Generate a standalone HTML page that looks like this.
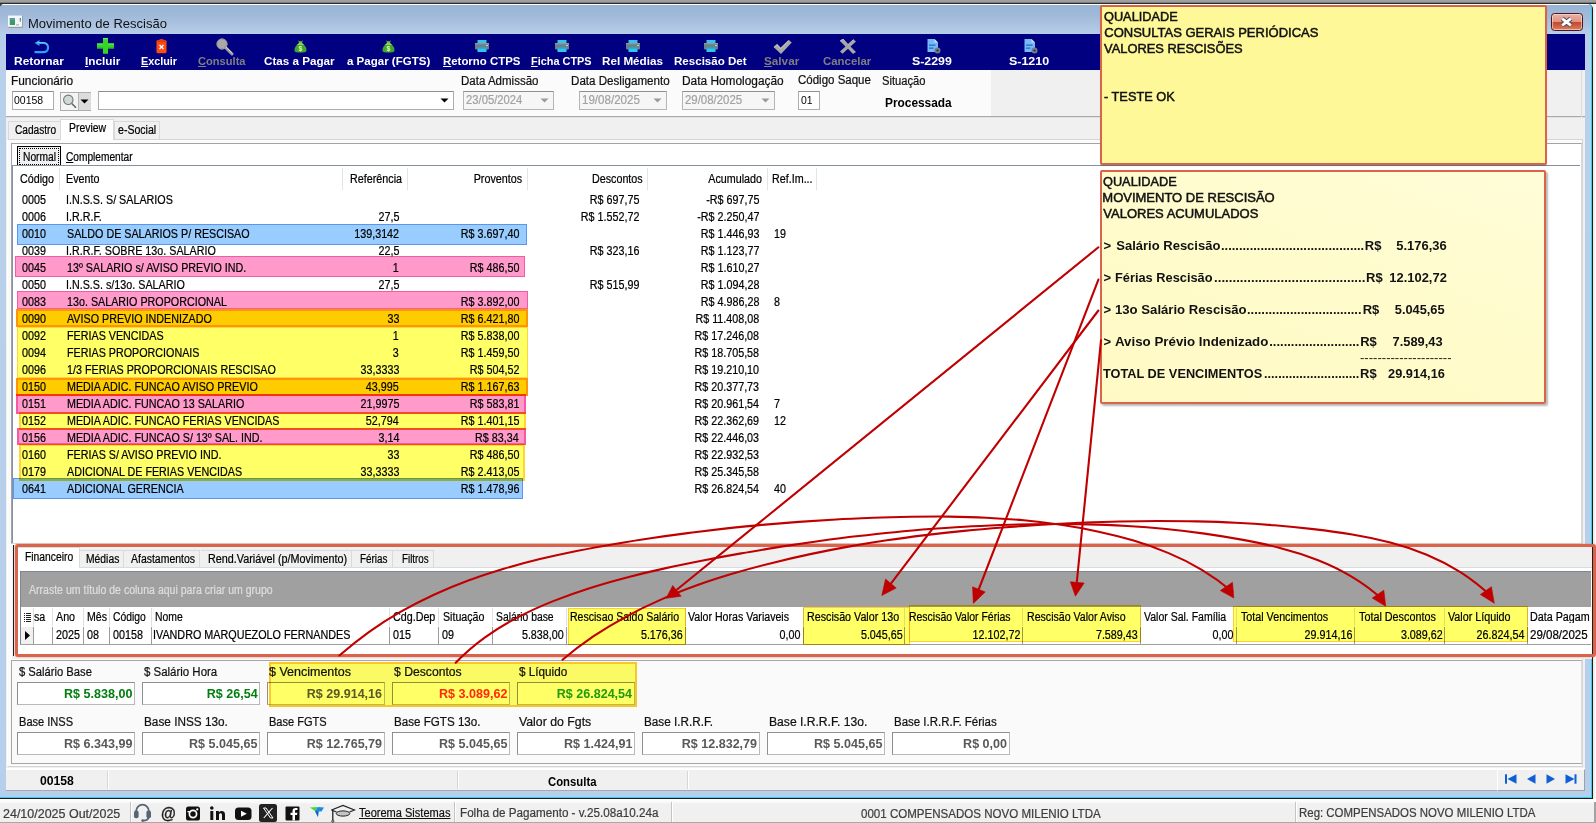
<!DOCTYPE html>
<html lang="pt-BR"><head><meta charset="utf-8"><title>Movimento de Rescisão</title>
<style>
html,body{margin:0;padding:0}
body{width:1596px;height:823px;overflow:hidden;position:relative;background:#fff;font-family:"Liberation Sans",sans-serif;}
#r{position:absolute;left:0;top:0;width:1596px;height:823px;overflow:hidden}
#r div,#r svg,#r .t{position:absolute}
.t{white-space:pre;color:#000}
.g{-webkit-text-stroke:.22px currentColor}
u{text-decoration:underline}
</style></head>
<body><div id="r">
<div style="left:0px;top:0px;width:1596px;height:823px;background:#fff"></div>
<div style="left:0px;top:0px;width:1596px;height:4px;background:linear-gradient(#a2a2a2,#9c9c9c 2.2px,#4a4a4a 3px,#262626 3.6px)"></div>
<div style="left:1593px;top:4px;width:3px;height:819px;background:linear-gradient(90deg,#e6e6e6,#fff)"></div>
<div style="left:0px;top:4px;width:1593px;height:795px;background:#1c1c1c;border-radius:0 5px 0 0"></div>
<div style="left:0px;top:4px;width:1592px;height:794px;background:#35cdf0;border-radius:0 4px 0 0"></div>
<div style="left:0px;top:4px;width:1591px;height:793px;background:linear-gradient(#fff,#fff 1px,#99b4d5 1px,#a1bad9 12px,#afc7e3 24px,#b6cee9 30px,#b8d0ea 60px,#b7cfea);border-radius:0 4px 0 0;"></div>
<svg style="left:0;top:4px" width="3" height="3" viewBox="0 0 3 3"><path d="M0 0 H2.6 L0 2.6Z" fill="#4a4a4a"/></svg>
<svg style="left:8px;top:15px" width="16" height="14" viewBox="0 0 16 14"><rect x="0.3" y="0.8" width="14.4" height="12" fill="#8d9299"/><rect x="0" y="0.5" width="14" height="11.3" fill="#f4f6f8"/><rect x="1.8" y="3" width="5.2" height="7" fill="#3f9a62"/><rect x="1.8" y="3" width="5.2" height="2.2" fill="#4f9bb8"/><rect x="11.8" y="3" width="1" height="2.4" fill="#2b5fa8"/><rect x="11.8" y="5.2" width="1" height="1.6" fill="#3faa4a"/><rect x="8" y="9" width="3" height="1.6" fill="#c3c7cc"/></svg>
<span class="t" style="top:18px;font-size:12.5px;line-height:12.5px;color:#111;left:28.16px;transform:scaleX(1.0420);transform-origin:0 0;">Movimento de Rescisão</span>
<div style="left:1551px;top:13px;width:32px;height:18px;border:1px solid #4a1522;border-radius:3.5px;box-sizing:border-box;background:linear-gradient(#eab0a2,#e09482 47%,#c3472b 50%,#cc5a3e 70%,#d88068);box-shadow:inset 0 0 0 1px rgba(255,235,225,.55)"></div>
<svg style="left:1559px;top:16px" width="15" height="12" viewBox="0 0 15 12"><path d="M3.2 2.6 L11.8 9.4 M11.8 2.6 L3.2 9.4" stroke="#474a5c" stroke-width="4.6" stroke-linecap="butt"/><path d="M3.2 2.6 L11.8 9.4 M11.8 2.6 L3.2 9.4" stroke="#fff" stroke-width="2.7" stroke-linecap="butt"/></svg>
<div style="left:6px;top:34px;width:1579px;height:757px;background:#f0f0f0"></div>
<div style="left:6px;top:34px;width:1579px;height:36px;background:#000080"></div>
<span class="t" style="top:56px;font-size:11px;line-height:11px;font-weight:bold;color:#fff;left:14.40px;transform:scaleX(1.0867);transform-origin:0 0;">Retornar</span>
<svg style="left:32.5px;top:39px" width="17" height="15" viewBox="0 0 17 15"><path d="M6.5 1 L1.5 4 L6.5 7 Z" fill="#2aa0ff"/><path d="M4 4 H10.5 A4.6 4.6 0 0 1 10.5 13.2 H1.5" fill="none" stroke="#2aa0ff" stroke-width="2.2"/><path d="M4 3.6 H10.5 A4.2 4.2 0 0 1 14.6 6" fill="none" stroke="#9bd8ff" stroke-width=".8"/></svg>
<span class="t" style="top:56px;font-size:11px;line-height:11px;font-weight:bold;color:#fff;left:85.00px;transform:scaleX(1.0675);transform-origin:0 0;"><u>I</u>ncluir</span>
<svg style="left:96.5px;top:38px" width="17" height="16" viewBox="0 0 17 16"><path d="M6 0 H11 V5.5 H17 V10.5 H11 V16 H6 V10.5 H0 V5.5 H6 Z" fill="#35d42a"/><path d="M6 0 H11 V1.2 H6 Z M0 5.5 H6 V6.5 H0Z M11 5.5 H17 V6.5 H11Z" fill="#6df060"/><path d="M0 9.6 H6 V10.5 H0Z M11 9.6 H17 V10.5 H11Z M6 15 H11 V16 H6Z" fill="#22a81c"/></svg>
<span class="t" style="top:56px;font-size:11px;line-height:11px;font-weight:bold;color:#fff;left:141.00px;transform:scaleX(0.9812);transform-origin:0 0;"><u>E</u>xcluir</span>
<svg style="left:155.5px;top:39px" width="11" height="15" viewBox="0 0 11 15"><rect x="3.5" y="0" width="4" height="2" fill="#d93a10"/><rect x="0.5" y="1.3" width="10" height="13" rx="1.5" fill="#ff4a12"/><rect x="0.5" y="1.3" width="10" height="2" rx="1" fill="#e23c0c"/><path d="M3.5 6 L7.5 10 M7.5 6 L3.5 10" stroke="#fff" stroke-width="1.4"/></svg>
<span class="t" style="top:56px;font-size:11px;line-height:11px;font-weight:bold;color:#7f7f7f;left:198.00px;transform:scaleX(1.0096);transform-origin:0 0;"><u>C</u>onsulta</span>
<svg style="left:215.5px;top:38px" width="18" height="18" viewBox="0 0 18 18"><circle cx="6" cy="6" r="5.2" fill="#a9a9a9"/><circle cx="6" cy="6" r="5.2" fill="none" stroke="#8f8f8f" stroke-width="1"/><path d="M9.5 9.5 L16 16" stroke="#9c9c9c" stroke-width="3" stroke-linecap="round"/><path d="M10 9 L16.5 15.5" stroke="#d8d8d8" stroke-width="1"/></svg>
<span class="t" style="top:56px;font-size:11px;line-height:11px;font-weight:bold;color:#fff;left:264.00px;transform:scaleX(1.0599);transform-origin:0 0;">Ctas a Pagar</span>
<svg style="left:293.5px;top:40px" width="13" height="13" viewBox="0 0 13 13"><path d="M4.3 0.3 L5.5 1.3 H7.5 L8.7 0.3 L8 3 H5 Z" fill="#6fc04a"/><path d="M5 3 H8 C11 5 13 8 12.5 11 C12 13 1 13 0.5 11 C0 8 2 5 5 3Z" fill="#3fa535"/><path d="M5 3 H8 C9 4 9.5 4.5 10 5 H3 C3.5 4.5 4 4 5 3Z" fill="#8fd14f"/><text x="6.5" y="11" font-size="7" font-weight="bold" text-anchor="middle" fill="#eaf7a0" font-family="Liberation Sans">$</text></svg>
<span class="t" style="top:56px;font-size:11px;line-height:11px;font-weight:bold;color:#fff;left:347.00px;transform:scaleX(1.0477);transform-origin:0 0;">a Pagar (FGTS)</span>
<svg style="left:382.2px;top:40px" width="13" height="13" viewBox="0 0 13 13"><path d="M4.3 0.3 L5.5 1.3 H7.5 L8.7 0.3 L8 3 H5 Z" fill="#6fc04a"/><path d="M5 3 H8 C11 5 13 8 12.5 11 C12 13 1 13 0.5 11 C0 8 2 5 5 3Z" fill="#3fa535"/><path d="M5 3 H8 C9 4 9.5 4.5 10 5 H3 C3.5 4.5 4 4 5 3Z" fill="#8fd14f"/><text x="6.5" y="11" font-size="7" font-weight="bold" text-anchor="middle" fill="#eaf7a0" font-family="Liberation Sans">$</text></svg>
<span class="t" style="top:56px;font-size:11px;line-height:11px;font-weight:bold;color:#fff;left:443.00px;transform:scaleX(1.0375);transform-origin:0 0;"><u>R</u>etorno CTPS</span>
<svg style="left:475px;top:40px" width="14" height="12" viewBox="0 0 14 12"><rect x="2.5" y="0" width="9" height="3.6" fill="#35c3ee"/><rect x="0" y="3" width="14" height="6.5" rx="1" fill="#6e7f86"/><rect x="0" y="3" width="14" height="1.3" fill="#8b9aa0"/><rect x="2.5" y="7.6" width="9" height="4.4" fill="#35c3ee"/><rect x="2.5" y="7.6" width="9" height="1" fill="#1d9fce"/><rect x="11.3" y="5" width="1.4" height="1" fill="#d8f4ff"/></svg>
<span class="t" style="top:56px;font-size:11px;line-height:11px;font-weight:bold;color:#fff;left:531.00px;transform:scaleX(0.9920);transform-origin:0 0;"><u>F</u>icha CTPS</span>
<svg style="left:554.5px;top:40px" width="14" height="12" viewBox="0 0 14 12"><rect x="2.5" y="0" width="9" height="3.6" fill="#35c3ee"/><rect x="0" y="3" width="14" height="6.5" rx="1" fill="#6e7f86"/><rect x="0" y="3" width="14" height="1.3" fill="#8b9aa0"/><rect x="2.5" y="7.6" width="9" height="4.4" fill="#35c3ee"/><rect x="2.5" y="7.6" width="9" height="1" fill="#1d9fce"/><rect x="11.3" y="5" width="1.4" height="1" fill="#d8f4ff"/></svg>
<span class="t" style="top:56px;font-size:11px;line-height:11px;font-weight:bold;color:#fff;left:602.00px;transform:scaleX(1.0602);transform-origin:0 0;">Rel Médias</span>
<svg style="left:625.8px;top:40px" width="14" height="12" viewBox="0 0 14 12"><rect x="2.5" y="0" width="9" height="3.6" fill="#35c3ee"/><rect x="0" y="3" width="14" height="6.5" rx="1" fill="#6e7f86"/><rect x="0" y="3" width="14" height="1.3" fill="#8b9aa0"/><rect x="2.5" y="7.6" width="9" height="4.4" fill="#35c3ee"/><rect x="2.5" y="7.6" width="9" height="1" fill="#1d9fce"/><rect x="11.3" y="5" width="1.4" height="1" fill="#d8f4ff"/></svg>
<span class="t" style="top:56px;font-size:11px;line-height:11px;font-weight:bold;color:#fff;left:674.00px;transform:scaleX(1.0515);transform-origin:0 0;">Rescisão Det</span>
<svg style="left:704px;top:40px" width="14" height="12" viewBox="0 0 14 12"><rect x="2.5" y="0" width="9" height="3.6" fill="#35c3ee"/><rect x="0" y="3" width="14" height="6.5" rx="1" fill="#6e7f86"/><rect x="0" y="3" width="14" height="1.3" fill="#8b9aa0"/><rect x="2.5" y="7.6" width="9" height="4.4" fill="#35c3ee"/><rect x="2.5" y="7.6" width="9" height="1" fill="#1d9fce"/><rect x="11.3" y="5" width="1.4" height="1" fill="#d8f4ff"/></svg>
<span class="t" style="top:56px;font-size:11px;line-height:11px;font-weight:bold;color:#7f7f7f;left:764.00px;transform:scaleX(1.0668);transform-origin:0 0;"><u>S</u>alvar</span>
<svg style="left:772.5px;top:40px" width="19" height="14" viewBox="0 0 19 14"><path d="M0.5 7 L4.2 3.8 L7.6 7.6 L15.5 0 L18.8 2.6 L8 14 Z" fill="#a8a8a8"/><path d="M1 7.5 L4 5 L7.5 9 L16 0.5" fill="none" stroke="#c9c9c9" stroke-width=".8"/></svg>
<span class="t" style="top:56px;font-size:11px;line-height:11px;font-weight:bold;color:#7f7f7f;left:823.00px;transform:scaleX(1.0384);transform-origin:0 0;">Cancelar</span>
<svg style="left:839px;top:39px" width="18" height="15" viewBox="0 0 18 15"><path d="M1 2 L4 0 L9 5.5 L14.5 0.5 L17 2.5 L11.5 7.5 L17 13 L14 15 L9 9.8 L3.5 14.8 L1 12.5 L6.5 7.5 Z" fill="#a6a6a6"/><path d="M1 2 L4 0 L9 5.5 L14.5 0.5" fill="none" stroke="#cfcfcf" stroke-width=".8"/></svg>
<span class="t" style="top:56px;font-size:11px;line-height:11px;font-weight:bold;color:#fff;left:912.00px;transform:scaleX(1.1230);transform-origin:0 0;">S-2299</span>
<svg style="left:926.5px;top:39px" width="14" height="15" viewBox="0 0 14 15"><path d="M0.5 0 H7.5 L11 3.5 V13 H0.5 Z" fill="#78b8f4"/><path d="M7.5 0 L11 3.5 H7.5 Z" fill="#c4e2ff"/><rect x="2" y="5.4" width="6.5" height="1.6" fill="#2f7bd8"/><rect x="2" y="8.4" width="4.5" height="1.6" fill="#2f7bd8"/><circle cx="10.5" cy="11.5" r="3" fill="#6f7d86"/><circle cx="10.5" cy="11.5" r="1.1" fill="#1a2a7a"/></svg>
<span class="t" style="top:56px;font-size:11px;line-height:11px;font-weight:bold;color:#fff;left:1009.00px;transform:scaleX(1.1314);transform-origin:0 0;">S-1210</span>
<svg style="left:1023.5px;top:39px" width="14" height="15" viewBox="0 0 14 15"><path d="M0.5 0 H7.5 L11 3.5 V13 H0.5 Z" fill="#78b8f4"/><path d="M7.5 0 L11 3.5 H7.5 Z" fill="#c4e2ff"/><rect x="2" y="5.4" width="6.5" height="1.6" fill="#2f7bd8"/><rect x="2" y="8.4" width="4.5" height="1.6" fill="#2f7bd8"/><circle cx="10.5" cy="11.5" r="3" fill="#6f7d86"/><circle cx="10.5" cy="11.5" r="1.1" fill="#1a2a7a"/></svg>
<div style="left:6px;top:70px;width:985px;height:47px;background:#fbfbfb"></div>
<div style="left:6px;top:116px;width:1579px;height:1px;background:#a9a9a9"></div>
<div style="left:6px;top:117px;width:1579px;height:1px;background:#e3e3e3"></div>
<div style="left:1581px;top:70px;width:1px;height:47px;background:#dcdcdc"></div>
<span class="t g" style="top:75px;font-size:12px;line-height:12px;color:#111;left:11.20px;transform:scaleX(0.9900);transform-origin:0 0;">Funcionário</span>
<span class="t g" style="top:75px;font-size:12px;line-height:12px;color:#111;left:461.20px;transform:scaleX(0.9597);transform-origin:0 0;">Data Admissão</span>
<span class="t g" style="top:75px;font-size:12px;line-height:12px;color:#111;left:571.30px;transform:scaleX(0.9670);transform-origin:0 0;">Data Desligamento</span>
<span class="t g" style="top:75px;font-size:12px;line-height:12px;color:#111;left:681.60px;transform:scaleX(0.9898);transform-origin:0 0;">Data Homologação</span>
<span class="t g" style="top:74px;font-size:12px;line-height:12px;color:#111;left:797.60px;transform:scaleX(0.9583);transform-origin:0 0;">Código Saque</span>
<span class="t g" style="top:75px;font-size:12px;line-height:12px;color:#111;left:881.60px;transform:scaleX(0.9314);transform-origin:0 0;">Situação</span>
<span class="t" style="top:97px;font-size:12px;line-height:12px;font-weight:bold;left:884.60px;transform:scaleX(0.9896);transform-origin:0 0;">Processada</span>
<div style="left:12px;top:91px;width:42px;height:19px;box-sizing:border-box;border:1px solid #abadb3;border-top-color:#8e8f93;background:#fff"></div>
<span class="t" style="top:95px;font-size:11px;line-height:11px;left:14.20px;transform:scaleX(0.9517);transform-origin:0 0;">00158</span>
<div style="left:60px;top:92px;width:31px;height:19px;box-sizing:border-box;border:1px solid #adadad;background:#f4f4f4"></div>
<div style="left:78px;top:93px;width:12px;height:17px;background:#dcdcdc;border-left:1px solid #b4b4b4"></div>
<svg style="left:62px;top:93px" width="16" height="17" viewBox="0 0 16 17"><circle cx="6.3" cy="6.8" r="4.7" fill="#cfdad8" stroke="#6e7b78" stroke-width="1.1"/><path d="M9.8 10.5 L14 14.8" stroke="#5b6663" stroke-width="1.5"/></svg>
<svg style="left:80px;top:99px" width="9" height="5" viewBox="0 0 9 5"><path d="M0.5 0.5 H8.5 L4.5 4.5 Z" fill="#000"/></svg>
<div style="left:98px;top:91px;width:356px;height:19px;box-sizing:border-box;border:1px solid #abadb3;border-top-color:#8e8f93;background:#fff"></div>
<svg style="left:440px;top:98px" width="9" height="5" viewBox="0 0 9 5"><path d="M0.5 0.5 H8.5 L4.5 4.5 Z" fill="#000"/></svg>
<div style="left:463px;top:91px;width:91px;height:19px;box-sizing:border-box;border:1px solid #b5b5b5;border-top-color:#8e8f93;background:#f6f6f6"></div>
<span class="t g" style="top:94px;font-size:12px;line-height:12px;color:#a2a2a2;left:466.40px;transform:scaleX(0.9373);transform-origin:0 0;">23/05/2024</span>
<svg style="left:540px;top:98px" width="9" height="5" viewBox="0 0 9 5"><path d="M0.5 0.5 H8.5 L4.5 4.5 Z" fill="#9a9a9a"/></svg>
<div style="left:579px;top:91px;width:88px;height:19px;box-sizing:border-box;border:1px solid #b5b5b5;border-top-color:#8e8f93;background:#f6f6f6"></div>
<span class="t g" style="top:94px;font-size:12px;line-height:12px;color:#a2a2a2;left:581.50px;transform:scaleX(0.9638);transform-origin:0 0;">19/08/2025</span>
<svg style="left:653px;top:98px" width="9" height="5" viewBox="0 0 9 5"><path d="M0.5 0.5 H8.5 L4.5 4.5 Z" fill="#9a9a9a"/></svg>
<div style="left:682px;top:91px;width:93px;height:19px;box-sizing:border-box;border:1px solid #b5b5b5;border-top-color:#8e8f93;background:#f6f6f6"></div>
<span class="t g" style="top:94px;font-size:12px;line-height:12px;color:#a2a2a2;left:684.80px;transform:scaleX(0.9506);transform-origin:0 0;">29/08/2025</span>
<svg style="left:761px;top:98px" width="9" height="5" viewBox="0 0 9 5"><path d="M0.5 0.5 H8.5 L4.5 4.5 Z" fill="#9a9a9a"/></svg>
<div style="left:798px;top:91px;width:22px;height:19px;box-sizing:border-box;border:1px solid #abadb3;border-top-color:#8e8f93;background:#fff"></div>
<span class="t" style="top:95px;font-size:11px;line-height:11px;left:800.50px;transform:scaleX(0.9490);transform-origin:0 0;">01</span>
<div style="left:8px;top:121px;width:53px;height:18px;box-sizing:border-box;border:1px solid #d9d9d9;border-bottom:none;background:#f0f0f0"></div>
<div style="left:114px;top:121px;width:46px;height:18px;box-sizing:border-box;border:1px solid #d9d9d9;border-bottom:none;background:#f0f0f0"></div>
<div style="left:7px;top:138.5px;width:1576px;height:628.5px;box-sizing:border-box;border:1px solid #d5d5d5;border-left-color:#fff;background:#fbfbfb"></div>
<div style="left:60px;top:118.5px;width:54px;height:21px;box-sizing:border-box;border:1px solid #d9d9d9;border-bottom:none;background:#fff"></div>
<span class="t g" style="top:124px;font-size:12px;line-height:12px;left:14.60px;transform:scaleX(0.8446);transform-origin:0 0;">Cadastro</span>
<span class="t g" style="top:122px;font-size:12px;line-height:12px;left:68.80px;transform:scaleX(0.8695);transform-origin:0 0;">Preview</span>
<span class="t g" style="top:124px;font-size:12px;line-height:12px;left:118.40px;transform:scaleX(0.8808);transform-origin:0 0;">e-Social</span>
<div style="left:11px;top:143px;width:1571px;height:401px;box-sizing:border-box;border:1px solid #a3a3a3;border-right-color:#d9d9d9;border-bottom-color:#d9d9d9;background:#fff"></div>
<div style="left:17px;top:146px;width:44px;height:20px;box-sizing:border-box;border:1px solid #000;background:#f0f0f0"></div>
<div style="left:19px;top:148px;width:40px;height:17px;box-sizing:border-box;border:1px dotted #000"></div>
<span class="t g" style="top:151px;font-size:12px;line-height:12px;left:22.80px;transform:scaleX(0.8525);transform-origin:0 0;">Normal</span>
<span class="t g" style="top:151px;font-size:12px;line-height:12px;left:65.60px;transform:scaleX(0.8462);transform-origin:0 0;"><u>C</u>omplementar</span>
<div style="left:12px;top:165px;width:1568px;height:378px;background:#fff"></div>
<div style="left:12px;top:165px;width:1568px;height:1px;background:#8391a3"></div>
<div style="left:12px;top:165px;width:1px;height:378px;background:#8391a3"></div>
<div style="left:59px;top:168px;width:1px;height:22px;background:#e4e4e4"></div>
<div style="left:341.5px;top:168px;width:1px;height:22px;background:#e4e4e4"></div>
<div style="left:406.5px;top:168px;width:1px;height:22px;background:#e4e4e4"></div>
<div style="left:526.5px;top:168px;width:1px;height:22px;background:#e4e4e4"></div>
<div style="left:646.5px;top:168px;width:1px;height:22px;background:#e4e4e4"></div>
<div style="left:766.5px;top:168px;width:1px;height:22px;background:#e4e4e4"></div>
<div style="left:816px;top:168px;width:1px;height:22px;background:#e4e4e4"></div>
<span class="t g" style="top:173px;font-size:12px;line-height:12px;left:20.30px;transform:scaleX(0.8950);transform-origin:0 0;">Código</span>
<span class="t g" style="top:173px;font-size:12px;line-height:12px;left:65.50px;transform:scaleX(0.8950);transform-origin:0 0;">Evento</span>
<span class="t g" style="top:173px;font-size:12px;line-height:12px;right:1193.89px;transform:scaleX(0.8950);transform-origin:100% 0;">Referência</span>
<span class="t g" style="top:173px;font-size:12px;line-height:12px;right:1073.60px;transform:scaleX(0.8950);transform-origin:100% 0;">Proventos</span>
<span class="t g" style="top:173px;font-size:12px;line-height:12px;right:953.70px;transform:scaleX(0.8950);transform-origin:100% 0;">Descontos</span>
<span class="t g" style="top:173px;font-size:12px;line-height:12px;right:834.29px;transform:scaleX(0.8950);transform-origin:100% 0;">Acumulado</span>
<span class="t g" style="top:173px;font-size:12px;line-height:12px;left:772.40px;transform:scaleX(0.8950);transform-origin:0 0;">Ref.Im...</span>
<span class="t g" style="top:194px;font-size:12px;line-height:12px;left:21.50px;transform:scaleX(0.8950);transform-origin:0 0;">0005</span>
<span class="t g" style="top:194px;font-size:12px;line-height:12px;left:65.70px;transform:scaleX(0.8950);transform-origin:0 0;">I.N.S.S. S/ SALARIOS</span>
<span class="t g" style="top:194px;font-size:12px;line-height:12px;right:956.89px;transform:scaleX(0.8950);transform-origin:100% 0;">R$ 697,75</span>
<span class="t g" style="top:194px;font-size:12px;line-height:12px;right:836.99px;transform:scaleX(0.8950);transform-origin:100% 0;">-R$ 697,75</span>
<span class="t g" style="top:211px;font-size:12px;line-height:12px;left:21.50px;transform:scaleX(0.8950);transform-origin:0 0;">0006</span>
<span class="t g" style="top:211px;font-size:12px;line-height:12px;left:65.70px;transform:scaleX(0.8950);transform-origin:0 0;">I.R.R.F.</span>
<span class="t g" style="top:211px;font-size:12px;line-height:12px;right:1196.99px;transform:scaleX(0.8950);transform-origin:100% 0;">27,5</span>
<span class="t g" style="top:211px;font-size:12px;line-height:12px;right:956.89px;transform:scaleX(0.8950);transform-origin:100% 0;">R$ 1.552,72</span>
<span class="t g" style="top:211px;font-size:12px;line-height:12px;right:836.99px;transform:scaleX(0.8950);transform-origin:100% 0;">-R$ 2.250,47</span>
<span class="t g" style="top:228px;font-size:12px;line-height:12px;left:21.50px;transform:scaleX(0.8950);transform-origin:0 0;">0010</span>
<span class="t g" style="top:228px;font-size:12px;line-height:12px;left:66.60px;transform:scaleX(0.8950);transform-origin:0 0;">SALDO DE SALARIOS P/ RESCISAO</span>
<span class="t g" style="top:228px;font-size:12px;line-height:12px;right:1196.99px;transform:scaleX(0.8950);transform-origin:100% 0;">139,3142</span>
<span class="t g" style="top:228px;font-size:12px;line-height:12px;right:1076.89px;transform:scaleX(0.8950);transform-origin:100% 0;">R$ 3.697,40</span>
<span class="t g" style="top:228px;font-size:12px;line-height:12px;right:836.99px;transform:scaleX(0.8950);transform-origin:100% 0;">R$ 1.446,93</span>
<span class="t g" style="top:228px;font-size:12px;line-height:12px;left:773.60px;transform:scaleX(0.8950);transform-origin:0 0;">19</span>
<span class="t g" style="top:245px;font-size:12px;line-height:12px;left:21.50px;transform:scaleX(0.8950);transform-origin:0 0;">0039</span>
<span class="t g" style="top:245px;font-size:12px;line-height:12px;left:65.70px;transform:scaleX(0.8950);transform-origin:0 0;">I.R.R.F. SOBRE 13o. SALARIO</span>
<span class="t g" style="top:245px;font-size:12px;line-height:12px;right:1196.99px;transform:scaleX(0.8950);transform-origin:100% 0;">22,5</span>
<span class="t g" style="top:245px;font-size:12px;line-height:12px;right:956.89px;transform:scaleX(0.8950);transform-origin:100% 0;">R$ 323,16</span>
<span class="t g" style="top:245px;font-size:12px;line-height:12px;right:836.99px;transform:scaleX(0.8950);transform-origin:100% 0;">R$ 1.123,77</span>
<span class="t g" style="top:262px;font-size:12px;line-height:12px;left:21.50px;transform:scaleX(0.8950);transform-origin:0 0;">0045</span>
<span class="t g" style="top:262px;font-size:12px;line-height:12px;left:66.60px;transform:scaleX(0.8950);transform-origin:0 0;">13º SALARIO s/ AVISO PREVIO IND.</span>
<span class="t g" style="top:262px;font-size:12px;line-height:12px;right:1196.99px;transform:scaleX(0.8950);transform-origin:100% 0;">1</span>
<span class="t g" style="top:262px;font-size:12px;line-height:12px;right:1076.89px;transform:scaleX(0.8950);transform-origin:100% 0;">R$ 486,50</span>
<span class="t g" style="top:262px;font-size:12px;line-height:12px;right:836.99px;transform:scaleX(0.8950);transform-origin:100% 0;">R$ 1.610,27</span>
<span class="t g" style="top:279px;font-size:12px;line-height:12px;left:21.50px;transform:scaleX(0.8950);transform-origin:0 0;">0050</span>
<span class="t g" style="top:279px;font-size:12px;line-height:12px;left:65.70px;transform:scaleX(0.8950);transform-origin:0 0;">I.N.S.S. s/13o. SALARIO</span>
<span class="t g" style="top:279px;font-size:12px;line-height:12px;right:1196.99px;transform:scaleX(0.8950);transform-origin:100% 0;">27,5</span>
<span class="t g" style="top:279px;font-size:12px;line-height:12px;right:956.89px;transform:scaleX(0.8950);transform-origin:100% 0;">R$ 515,99</span>
<span class="t g" style="top:279px;font-size:12px;line-height:12px;right:836.99px;transform:scaleX(0.8950);transform-origin:100% 0;">R$ 1.094,28</span>
<span class="t g" style="top:296px;font-size:12px;line-height:12px;left:21.50px;transform:scaleX(0.8950);transform-origin:0 0;">0083</span>
<span class="t g" style="top:296px;font-size:12px;line-height:12px;left:66.60px;transform:scaleX(0.8950);transform-origin:0 0;">13o. SALARIO PROPORCIONAL</span>
<span class="t g" style="top:296px;font-size:12px;line-height:12px;right:1076.89px;transform:scaleX(0.8950);transform-origin:100% 0;">R$ 3.892,00</span>
<span class="t g" style="top:296px;font-size:12px;line-height:12px;right:836.99px;transform:scaleX(0.8950);transform-origin:100% 0;">R$ 4.986,28</span>
<span class="t g" style="top:296px;font-size:12px;line-height:12px;left:773.60px;transform:scaleX(0.8950);transform-origin:0 0;">8</span>
<span class="t g" style="top:313px;font-size:12px;line-height:12px;left:21.50px;transform:scaleX(0.8950);transform-origin:0 0;">0090</span>
<span class="t g" style="top:313px;font-size:12px;line-height:12px;left:66.60px;transform:scaleX(0.8950);transform-origin:0 0;">AVISO PREVIO INDENIZADO</span>
<span class="t g" style="top:313px;font-size:12px;line-height:12px;right:1196.99px;transform:scaleX(0.8950);transform-origin:100% 0;">33</span>
<span class="t g" style="top:313px;font-size:12px;line-height:12px;right:1076.89px;transform:scaleX(0.8950);transform-origin:100% 0;">R$ 6.421,80</span>
<span class="t g" style="top:313px;font-size:12px;line-height:12px;right:836.99px;transform:scaleX(0.8950);transform-origin:100% 0;">R$ 11.408,08</span>
<span class="t g" style="top:330px;font-size:12px;line-height:12px;left:21.50px;transform:scaleX(0.8950);transform-origin:0 0;">0092</span>
<span class="t g" style="top:330px;font-size:12px;line-height:12px;left:66.60px;transform:scaleX(0.8950);transform-origin:0 0;">FERIAS VENCIDAS</span>
<span class="t g" style="top:330px;font-size:12px;line-height:12px;right:1196.99px;transform:scaleX(0.8950);transform-origin:100% 0;">1</span>
<span class="t g" style="top:330px;font-size:12px;line-height:12px;right:1076.89px;transform:scaleX(0.8950);transform-origin:100% 0;">R$ 5.838,00</span>
<span class="t g" style="top:330px;font-size:12px;line-height:12px;right:836.99px;transform:scaleX(0.8950);transform-origin:100% 0;">R$ 17.246,08</span>
<span class="t g" style="top:347px;font-size:12px;line-height:12px;left:21.50px;transform:scaleX(0.8950);transform-origin:0 0;">0094</span>
<span class="t g" style="top:347px;font-size:12px;line-height:12px;left:66.60px;transform:scaleX(0.8950);transform-origin:0 0;">FERIAS PROPORCIONAIS</span>
<span class="t g" style="top:347px;font-size:12px;line-height:12px;right:1196.99px;transform:scaleX(0.8950);transform-origin:100% 0;">3</span>
<span class="t g" style="top:347px;font-size:12px;line-height:12px;right:1076.89px;transform:scaleX(0.8950);transform-origin:100% 0;">R$ 1.459,50</span>
<span class="t g" style="top:347px;font-size:12px;line-height:12px;right:836.99px;transform:scaleX(0.8950);transform-origin:100% 0;">R$ 18.705,58</span>
<span class="t g" style="top:364px;font-size:12px;line-height:12px;left:21.50px;transform:scaleX(0.8950);transform-origin:0 0;">0096</span>
<span class="t g" style="top:364px;font-size:12px;line-height:12px;left:66.60px;transform:scaleX(0.8950);transform-origin:0 0;">1/3 FERIAS PROPORCIONAIS RESCISAO</span>
<span class="t g" style="top:364px;font-size:12px;line-height:12px;right:1196.99px;transform:scaleX(0.8950);transform-origin:100% 0;">33,3333</span>
<span class="t g" style="top:364px;font-size:12px;line-height:12px;right:1076.89px;transform:scaleX(0.8950);transform-origin:100% 0;">R$ 504,52</span>
<span class="t g" style="top:364px;font-size:12px;line-height:12px;right:836.99px;transform:scaleX(0.8950);transform-origin:100% 0;">R$ 19.210,10</span>
<span class="t g" style="top:381px;font-size:12px;line-height:12px;left:21.50px;transform:scaleX(0.8950);transform-origin:0 0;">0150</span>
<span class="t g" style="top:381px;font-size:12px;line-height:12px;left:66.60px;transform:scaleX(0.8950);transform-origin:0 0;">MEDIA ADIC. FUNCAO AVISO PREVIO</span>
<span class="t g" style="top:381px;font-size:12px;line-height:12px;right:1196.99px;transform:scaleX(0.8950);transform-origin:100% 0;">43,995</span>
<span class="t g" style="top:381px;font-size:12px;line-height:12px;right:1076.89px;transform:scaleX(0.8950);transform-origin:100% 0;">R$ 1.167,63</span>
<span class="t g" style="top:381px;font-size:12px;line-height:12px;right:836.99px;transform:scaleX(0.8950);transform-origin:100% 0;">R$ 20.377,73</span>
<span class="t g" style="top:398px;font-size:12px;line-height:12px;left:21.50px;transform:scaleX(0.8950);transform-origin:0 0;">0151</span>
<span class="t g" style="top:398px;font-size:12px;line-height:12px;left:66.60px;transform:scaleX(0.8950);transform-origin:0 0;">MEDIA ADIC. FUNCAO 13 SALARIO</span>
<span class="t g" style="top:398px;font-size:12px;line-height:12px;right:1196.99px;transform:scaleX(0.8950);transform-origin:100% 0;">21,9975</span>
<span class="t g" style="top:398px;font-size:12px;line-height:12px;right:1076.89px;transform:scaleX(0.8950);transform-origin:100% 0;">R$ 583,81</span>
<span class="t g" style="top:398px;font-size:12px;line-height:12px;right:836.99px;transform:scaleX(0.8950);transform-origin:100% 0;">R$ 20.961,54</span>
<span class="t g" style="top:398px;font-size:12px;line-height:12px;left:773.60px;transform:scaleX(0.8950);transform-origin:0 0;">7</span>
<span class="t g" style="top:415px;font-size:12px;line-height:12px;left:21.50px;transform:scaleX(0.8950);transform-origin:0 0;">0152</span>
<span class="t g" style="top:415px;font-size:12px;line-height:12px;left:66.60px;transform:scaleX(0.8950);transform-origin:0 0;">MEDIA ADIC. FUNCAO FERIAS VENCIDAS</span>
<span class="t g" style="top:415px;font-size:12px;line-height:12px;right:1196.99px;transform:scaleX(0.8950);transform-origin:100% 0;">52,794</span>
<span class="t g" style="top:415px;font-size:12px;line-height:12px;right:1076.89px;transform:scaleX(0.8950);transform-origin:100% 0;">R$ 1.401,15</span>
<span class="t g" style="top:415px;font-size:12px;line-height:12px;right:836.99px;transform:scaleX(0.8950);transform-origin:100% 0;">R$ 22.362,69</span>
<span class="t g" style="top:415px;font-size:12px;line-height:12px;left:773.60px;transform:scaleX(0.8950);transform-origin:0 0;">12</span>
<span class="t g" style="top:432px;font-size:12px;line-height:12px;left:21.50px;transform:scaleX(0.8950);transform-origin:0 0;">0156</span>
<span class="t g" style="top:432px;font-size:12px;line-height:12px;left:66.60px;transform:scaleX(0.8950);transform-origin:0 0;">MEDIA ADIC. FUNCAO S/ 13º SAL. IND.</span>
<span class="t g" style="top:432px;font-size:12px;line-height:12px;right:1196.99px;transform:scaleX(0.8950);transform-origin:100% 0;">3,14</span>
<span class="t g" style="top:432px;font-size:12px;line-height:12px;right:1076.89px;transform:scaleX(0.8950);transform-origin:100% 0;">R$ 83,34</span>
<span class="t g" style="top:432px;font-size:12px;line-height:12px;right:836.99px;transform:scaleX(0.8950);transform-origin:100% 0;">R$ 22.446,03</span>
<span class="t g" style="top:449px;font-size:12px;line-height:12px;left:21.50px;transform:scaleX(0.8950);transform-origin:0 0;">0160</span>
<span class="t g" style="top:449px;font-size:12px;line-height:12px;left:66.60px;transform:scaleX(0.8950);transform-origin:0 0;">FERIAS S/ AVISO PREVIO IND.</span>
<span class="t g" style="top:449px;font-size:12px;line-height:12px;right:1196.99px;transform:scaleX(0.8950);transform-origin:100% 0;">33</span>
<span class="t g" style="top:449px;font-size:12px;line-height:12px;right:1076.89px;transform:scaleX(0.8950);transform-origin:100% 0;">R$ 486,50</span>
<span class="t g" style="top:449px;font-size:12px;line-height:12px;right:836.99px;transform:scaleX(0.8950);transform-origin:100% 0;">R$ 22.932,53</span>
<span class="t g" style="top:466px;font-size:12px;line-height:12px;left:21.50px;transform:scaleX(0.8950);transform-origin:0 0;">0179</span>
<span class="t g" style="top:466px;font-size:12px;line-height:12px;left:66.60px;transform:scaleX(0.8950);transform-origin:0 0;">ADICIONAL DE FERIAS VENCIDAS</span>
<span class="t g" style="top:466px;font-size:12px;line-height:12px;right:1196.99px;transform:scaleX(0.8950);transform-origin:100% 0;">33,3333</span>
<span class="t g" style="top:466px;font-size:12px;line-height:12px;right:1076.89px;transform:scaleX(0.8950);transform-origin:100% 0;">R$ 2.413,05</span>
<span class="t g" style="top:466px;font-size:12px;line-height:12px;right:836.99px;transform:scaleX(0.8950);transform-origin:100% 0;">R$ 25.345,58</span>
<span class="t g" style="top:483px;font-size:12px;line-height:12px;left:21.50px;transform:scaleX(0.8950);transform-origin:0 0;">0641</span>
<span class="t g" style="top:483px;font-size:12px;line-height:12px;left:66.60px;transform:scaleX(0.8950);transform-origin:0 0;">ADICIONAL GERENCIA</span>
<span class="t g" style="top:483px;font-size:12px;line-height:12px;right:1076.89px;transform:scaleX(0.8950);transform-origin:100% 0;">R$ 1.478,96</span>
<span class="t g" style="top:483px;font-size:12px;line-height:12px;right:836.99px;transform:scaleX(0.8950);transform-origin:100% 0;">R$ 26.824,54</span>
<span class="t g" style="top:483px;font-size:12px;line-height:12px;left:773.60px;transform:scaleX(0.8950);transform-origin:0 0;">40</span>
<div style="left:17px;top:223.5px;width:510px;height:21px;box-sizing:border-box;background:#9cf;border:1.5px solid #5a96f0;mix-blend-mode:multiply"></div>
<div style="left:15px;top:256px;width:510px;height:20.5px;box-sizing:border-box;background:#ff9acb;border:1.5px solid #f45aa5;mix-blend-mode:multiply"></div>
<div style="left:17px;top:291px;width:511px;height:18px;box-sizing:border-box;background:#ff9acb;border:1.5px solid #f45aa5;mix-blend-mode:multiply"></div>
<div style="left:17px;top:327px;width:510.5px;height:51px;box-sizing:border-box;background:#ff6;border:1.5px solid #ffd633;mix-blend-mode:multiply"></div>
<div style="left:16px;top:308.5px;width:512px;height:18.5px;box-sizing:border-box;background:#fc0;border:2px solid #ff9408;mix-blend-mode:multiply"></div>
<div style="left:19px;top:412px;width:506.5px;height:18px;box-sizing:border-box;background:#ff6;border:2px solid #ffd633;mix-blend-mode:multiply"></div>
<div style="left:19px;top:444px;width:506px;height:36.5px;box-sizing:border-box;background:#ff6;border:2px solid #ffd633;mix-blend-mode:multiply"></div>
<div style="left:16px;top:377.5px;width:512px;height:18.5px;box-sizing:border-box;background:#fc0;border:2px solid #ff9408;mix-blend-mode:multiply"></div>
<div style="left:16px;top:393.6px;width:509.7px;height:20px;box-sizing:border-box;background:#ff9acb;border:2.5px solid #f45aa5;mix-blend-mode:multiply"></div>
<div style="left:17px;top:427.8px;width:508.7px;height:16.9px;box-sizing:border-box;background:#ff9acb;border:2.5px solid #f45aa5;mix-blend-mode:multiply"></div>
<div style="left:13px;top:478px;width:510px;height:20.5px;box-sizing:border-box;background:#9cf;border:1.5px solid #5a96f0;mix-blend-mode:multiply"></div>
<div style="left:12px;top:545px;width:1580px;height:114px;background:#f0f0f0"></div>
<div style="left:17px;top:567px;width:1575px;height:89px;background:#fff;border-top:1px solid #dcdcdc"></div>
<div style="left:17px;top:547px;width:63.3px;height:21px;box-sizing:border-box;border:1px solid #dcdcdc;border-bottom:none;background:#fff"></div>
<span class="t g" style="top:551px;font-size:12px;line-height:12px;left:24.70px;transform:scaleX(0.8589);transform-origin:0 0;">Financeiro</span>
<div style="left:80.3px;top:549.5px;width:44px;height:17.5px;box-sizing:border-box;border:1px solid #dadada;border-bottom:none;border-left:none;background:#f0f0f0"></div>
<span class="t g" style="top:553px;font-size:12px;line-height:12px;left:85.70px;transform:scaleX(0.8608);transform-origin:0 0;">Médias</span>
<div style="left:124.3px;top:549.5px;width:76.2px;height:17.5px;box-sizing:border-box;border:1px solid #dadada;border-bottom:none;border-left:none;background:#f0f0f0"></div>
<span class="t g" style="top:553px;font-size:12px;line-height:12px;left:131.00px;transform:scaleX(0.8723);transform-origin:0 0;">Afastamentos</span>
<div style="left:200.5px;top:549.5px;width:151.1px;height:17.5px;box-sizing:border-box;border:1px solid #dadada;border-bottom:none;border-left:none;background:#f0f0f0"></div>
<span class="t g" style="top:553px;font-size:12px;line-height:12px;left:207.50px;transform:scaleX(0.8996);transform-origin:0 0;">Rend.Variável (p/Movimento)</span>
<div style="left:351.6px;top:549.5px;width:41.6px;height:17.5px;box-sizing:border-box;border:1px solid #dadada;border-bottom:none;border-left:none;background:#f0f0f0"></div>
<span class="t g" style="top:553px;font-size:12px;line-height:12px;left:359.60px;transform:scaleX(0.8248);transform-origin:0 0;">Férias</span>
<div style="left:393.2px;top:549.5px;width:40.6px;height:17.5px;box-sizing:border-box;border:1px solid #dadada;border-bottom:none;border-left:none;background:#f0f0f0"></div>
<span class="t g" style="top:553px;font-size:12px;line-height:12px;left:401.60px;transform:scaleX(0.8143);transform-origin:0 0;">Filtros</span>
<div style="left:20px;top:571px;width:1571px;height:35.5px;background:#a0a0a0;border-top:1px solid #7b8794;border-left:1px solid #7b8794;box-sizing:border-box"></div>
<span class="t g" style="top:584px;font-size:12px;line-height:12px;color:#dedede;left:28.90px;transform:scaleX(0.8783);transform-origin:0 0;">Arraste um título de coluna aqui para criar um grupo</span>
<div style="left:20px;top:606.5px;width:1571px;height:37.5px;background:#fff;border-left:1px solid #7b8794;box-sizing:border-box"></div>
<div style="left:20px;top:644px;width:1571px;height:1px;background:#a0a0a0"></div>
<div style="left:21px;top:626.5px;width:11.5px;height:17.5px;background:#f0f0f0"></div>
<div style="left:32.6px;top:608px;width:1px;height:18px;background:#e0e0e0"></div>
<div style="left:32.6px;top:626.5px;width:1px;height:17.5px;background:#9c9c9c"></div>
<div style="left:52.3px;top:608px;width:1px;height:18px;background:#e0e0e0"></div>
<div style="left:52.3px;top:626.5px;width:1px;height:17.5px;background:#9c9c9c"></div>
<div style="left:83.3px;top:608px;width:1px;height:18px;background:#e0e0e0"></div>
<div style="left:83.3px;top:626.5px;width:1px;height:17.5px;background:#9c9c9c"></div>
<div style="left:109.4px;top:608px;width:1px;height:18px;background:#e0e0e0"></div>
<div style="left:109.4px;top:626.5px;width:1px;height:17.5px;background:#9c9c9c"></div>
<div style="left:151.4px;top:608px;width:1px;height:18px;background:#e0e0e0"></div>
<div style="left:151.4px;top:626.5px;width:1px;height:17.5px;background:#9c9c9c"></div>
<div style="left:389.4px;top:608px;width:1px;height:18px;background:#e0e0e0"></div>
<div style="left:389.4px;top:626.5px;width:1px;height:17.5px;background:#9c9c9c"></div>
<div style="left:438.4px;top:608px;width:1px;height:18px;background:#e0e0e0"></div>
<div style="left:438.4px;top:626.5px;width:1px;height:17.5px;background:#9c9c9c"></div>
<div style="left:492.3px;top:608px;width:1px;height:18px;background:#e0e0e0"></div>
<div style="left:492.3px;top:626.5px;width:1px;height:17.5px;background:#9c9c9c"></div>
<div style="left:566px;top:608px;width:1px;height:18px;background:#e0e0e0"></div>
<div style="left:566px;top:626.5px;width:1px;height:17.5px;background:#9c9c9c"></div>
<div style="left:685px;top:608px;width:1px;height:18px;background:#e0e0e0"></div>
<div style="left:685px;top:626.5px;width:1px;height:17.5px;background:#9c9c9c"></div>
<div style="left:802.5px;top:608px;width:1px;height:18px;background:#e0e0e0"></div>
<div style="left:802.5px;top:626.5px;width:1px;height:17.5px;background:#9c9c9c"></div>
<div style="left:904px;top:608px;width:1px;height:18px;background:#e0e0e0"></div>
<div style="left:904px;top:626.5px;width:1px;height:17.5px;background:#9c9c9c"></div>
<div style="left:1021.8px;top:608px;width:1px;height:18px;background:#e0e0e0"></div>
<div style="left:1021.8px;top:626.5px;width:1px;height:17.5px;background:#9c9c9c"></div>
<div style="left:1140px;top:608px;width:1px;height:18px;background:#e0e0e0"></div>
<div style="left:1140px;top:626.5px;width:1px;height:17.5px;background:#9c9c9c"></div>
<div style="left:1235.5px;top:608px;width:1px;height:18px;background:#e0e0e0"></div>
<div style="left:1235.5px;top:626.5px;width:1px;height:17.5px;background:#9c9c9c"></div>
<div style="left:1354px;top:608px;width:1px;height:18px;background:#e0e0e0"></div>
<div style="left:1354px;top:626.5px;width:1px;height:17.5px;background:#9c9c9c"></div>
<div style="left:1444.4px;top:608px;width:1px;height:18px;background:#e0e0e0"></div>
<div style="left:1444.4px;top:626.5px;width:1px;height:17.5px;background:#9c9c9c"></div>
<div style="left:1526.5px;top:608px;width:1px;height:18px;background:#e0e0e0"></div>
<div style="left:1526.5px;top:626.5px;width:1px;height:17.5px;background:#9c9c9c"></div>
<svg style="left:24px;top:613px" width="7" height="9" viewBox="0 0 7 9"><path d="M0 .5H1M2 .5H7M0 2.5H1M2 2.5H7M0 4.5H1M2 4.5H7M0 6.5H1M2 6.5H7M0 8.5H1M2 8.5H7" stroke="#222" stroke-width="1"/></svg>
<svg style="left:25px;top:631px" width="6" height="9" viewBox="0 0 6 9"><path d="M0 0 L5 4.5 L0 9 Z" fill="#000"/></svg>
<span class="t g" style="top:611px;font-size:12px;line-height:12px;left:33.50px;transform:scaleX(0.8846);transform-origin:0 0;">sa</span>
<span class="t g" style="top:611px;font-size:12px;line-height:12px;left:56.00px;transform:scaleX(0.8903);transform-origin:0 0;">Ano</span>
<span class="t g" style="top:611px;font-size:12px;line-height:12px;left:87.00px;transform:scaleX(0.8822);transform-origin:0 0;">Mês</span>
<span class="t g" style="top:611px;font-size:12px;line-height:12px;left:113.00px;transform:scaleX(0.8604);transform-origin:0 0;">Código</span>
<span class="t g" style="top:611px;font-size:12px;line-height:12px;left:155.00px;transform:scaleX(0.8659);transform-origin:0 0;">Nome</span>
<span class="t g" style="top:611px;font-size:12px;line-height:12px;left:392.70px;transform:scaleX(0.8933);transform-origin:0 0;">Cdg.Dep</span>
<span class="t g" style="top:611px;font-size:12px;line-height:12px;left:442.80px;transform:scaleX(0.8868);transform-origin:0 0;">Situação</span>
<span class="t g" style="top:611px;font-size:12px;line-height:12px;left:496.40px;transform:scaleX(0.8637);transform-origin:0 0;">Salário base</span>
<span class="t g" style="top:611px;font-size:12px;line-height:12px;left:570.00px;transform:scaleX(0.8787);transform-origin:0 0;">Rescisao Saldo Salário</span>
<span class="t g" style="top:611px;font-size:12px;line-height:12px;left:688.00px;transform:scaleX(0.8839);transform-origin:0 0;">Valor Horas Variaveis</span>
<span class="t g" style="top:611px;font-size:12px;line-height:12px;left:806.60px;transform:scaleX(0.8928);transform-origin:0 0;">Rescisão Valor 13o</span>
<span class="t g" style="top:611px;font-size:12px;line-height:12px;left:908.50px;transform:scaleX(0.8714);transform-origin:0 0;">Rescisão Valor Férias</span>
<span class="t g" style="top:611px;font-size:12px;line-height:12px;left:1026.60px;transform:scaleX(0.8828);transform-origin:0 0;">Rescisão Valor Aviso</span>
<span class="t g" style="top:611px;font-size:12px;line-height:12px;left:1143.60px;transform:scaleX(0.8753);transform-origin:0 0;">Valor Sal. Família</span>
<span class="t g" style="top:611px;font-size:12px;line-height:12px;left:1240.90px;transform:scaleX(0.8933);transform-origin:0 0;">Total Vencimentos</span>
<span class="t g" style="top:611px;font-size:12px;line-height:12px;left:1359.20px;transform:scaleX(0.8995);transform-origin:0 0;">Total Descontos</span>
<span class="t g" style="top:611px;font-size:12px;line-height:12px;left:1448.00px;transform:scaleX(0.8952);transform-origin:0 0;">Valor Líquido</span>
<span class="t g" style="top:611px;font-size:12px;line-height:12px;left:1530.00px;transform:scaleX(0.8950);transform-origin:0 0;clip-path:inset(0 0 0 0);">Data Pagam</span>
<span class="t g" style="top:629px;font-size:12px;line-height:12px;left:55.70px;transform:scaleX(0.8950);transform-origin:0 0;">2025</span>
<span class="t g" style="top:629px;font-size:12px;line-height:12px;left:86.60px;transform:scaleX(0.8950);transform-origin:0 0;">08</span>
<span class="t g" style="top:629px;font-size:12px;line-height:12px;left:112.60px;transform:scaleX(0.8950);transform-origin:0 0;">00158</span>
<span class="t g" style="top:629px;font-size:12px;line-height:12px;left:153.10px;transform:scaleX(0.8981);transform-origin:0 0;">IVANDRO MARQUEZOLO FERNANDES</span>
<span class="t g" style="top:629px;font-size:12px;line-height:12px;left:392.50px;transform:scaleX(0.8950);transform-origin:0 0;">015</span>
<span class="t g" style="top:629px;font-size:12px;line-height:12px;left:442.00px;transform:scaleX(0.8950);transform-origin:0 0;">09</span>
<span class="t g" style="top:629px;font-size:12px;line-height:12px;right:1031.89px;transform:scaleX(0.8950);transform-origin:100% 0;">5.838,00</span>
<span class="t g" style="top:629px;font-size:12px;line-height:12px;right:913.49px;transform:scaleX(0.8950);transform-origin:100% 0;">5.176,36</span>
<span class="t g" style="top:629px;font-size:12px;line-height:12px;right:795.99px;transform:scaleX(0.8950);transform-origin:100% 0;">0,00</span>
<span class="t g" style="top:629px;font-size:12px;line-height:12px;right:693.49px;transform:scaleX(0.8950);transform-origin:100% 0;">5.045,65</span>
<span class="t g" style="top:629px;font-size:12px;line-height:12px;right:576.09px;transform:scaleX(0.8950);transform-origin:100% 0;">12.102,72</span>
<span class="t g" style="top:629px;font-size:12px;line-height:12px;right:457.99px;transform:scaleX(0.8950);transform-origin:100% 0;">7.589,43</span>
<span class="t g" style="top:629px;font-size:12px;line-height:12px;right:362.39px;transform:scaleX(0.8950);transform-origin:100% 0;">0,00</span>
<span class="t g" style="top:629px;font-size:12px;line-height:12px;right:243.39px;transform:scaleX(0.8950);transform-origin:100% 0;">29.914,16</span>
<span class="t g" style="top:629px;font-size:12px;line-height:12px;right:153.79px;transform:scaleX(0.8950);transform-origin:100% 0;">3.089,62</span>
<span class="t g" style="top:629px;font-size:12px;line-height:12px;right:71.69px;transform:scaleX(0.8950);transform-origin:100% 0;">26.824,54</span>
<span class="t g" style="top:629px;font-size:12px;line-height:12px;left:1530.00px;transform:scaleX(0.9605);transform-origin:0 0;">29/08/2025</span>
<div style="left:567.5px;top:608px;width:118px;height:36.7px;box-sizing:border-box;background:#ff6;border:1.5px solid #ffcf2e;mix-blend-mode:multiply"></div>
<div style="left:803px;top:607px;width:106.6px;height:38px;box-sizing:border-box;background:#ff6;border:1.5px solid #ffcf2e;mix-blend-mode:multiply"></div>
<div style="left:909px;top:605.3px;width:232px;height:37px;box-sizing:border-box;background:#ff6;border:1.5px solid #ffcf2e;mix-blend-mode:multiply"></div>
<div style="left:1233.4px;top:606.4px;width:294.2px;height:35.2px;box-sizing:border-box;background:#ff6;border:1.5px solid #ffcf2e;mix-blend-mode:multiply"></div>
<div style="left:11px;top:660px;width:1571px;height:103.5px;box-sizing:border-box;border:1px solid #a6a6a6;border-right-color:#dcdcdc;background:#fafafa"></div>
<div style="left:17px;top:682px;width:118px;height:23px;box-sizing:border-box;border:1px solid #8f8f8f;border-right-color:#b9b9b9;border-bottom-color:#b9b9b9;background:#fff"></div>
<span class="t g" style="top:666px;font-size:12px;line-height:12px;color:#111;left:19.30px;transform:scaleX(0.9340);transform-origin:0 0;">$ Salário Base</span>
<span class="t" style="top:688px;font-size:12px;line-height:12px;font-weight:bold;color:#007f0e;right:1463.54px;transform:scaleX(1.0460);transform-origin:100% 0;">R$ 5.838,00</span>
<div style="left:142px;top:682px;width:118px;height:23px;box-sizing:border-box;border:1px solid #8f8f8f;border-right-color:#b9b9b9;border-bottom-color:#b9b9b9;background:#fff"></div>
<span class="t g" style="top:666px;font-size:12px;line-height:12px;color:#111;left:144.30px;transform:scaleX(0.9542);transform-origin:0 0;">$ Salário Hora</span>
<span class="t" style="top:688px;font-size:12px;line-height:12px;font-weight:bold;color:#007f0e;right:1338.54px;transform:scaleX(1.0460);transform-origin:100% 0;">R$ 26,54</span>
<div style="left:267px;top:682px;width:118px;height:23px;box-sizing:border-box;border:1px solid #8f8f8f;border-right-color:#b9b9b9;border-bottom-color:#b9b9b9;background:#fff"></div>
<span class="t g" style="top:666px;font-size:12px;line-height:12px;color:#111;left:269.30px;transform:scaleX(1.0417);transform-origin:0 0;">$ Vencimentos</span>
<span class="t" style="top:688px;font-size:12px;line-height:12px;font-weight:bold;color:#595959;right:1213.54px;transform:scaleX(1.0460);transform-origin:100% 0;">R$ 29.914,16</span>
<div style="left:392px;top:682px;width:118px;height:23px;box-sizing:border-box;border:1px solid #8f8f8f;border-right-color:#b9b9b9;border-bottom-color:#b9b9b9;background:#fff"></div>
<span class="t g" style="top:666px;font-size:12px;line-height:12px;color:#111;left:394.30px;transform:scaleX(1.0149);transform-origin:0 0;">$ Descontos</span>
<span class="t" style="top:688px;font-size:12px;line-height:12px;font-weight:bold;color:#ff2a1a;right:1088.54px;transform:scaleX(1.0460);transform-origin:100% 0;">R$ 3.089,62</span>
<div style="left:517px;top:682px;width:118px;height:23px;box-sizing:border-box;border:1px solid #8f8f8f;border-right-color:#b9b9b9;border-bottom-color:#b9b9b9;background:#fff"></div>
<span class="t g" style="top:666px;font-size:12px;line-height:12px;color:#111;left:519.30px;transform:scaleX(0.9758);transform-origin:0 0;">$ Líquido</span>
<span class="t" style="top:688px;font-size:12px;line-height:12px;font-weight:bold;color:#1f9a1f;right:963.54px;transform:scaleX(1.0460);transform-origin:100% 0;">R$ 26.824,54</span>
<div style="left:17px;top:732px;width:118px;height:23px;box-sizing:border-box;border:1px solid #8f8f8f;border-right-color:#b9b9b9;border-bottom-color:#b9b9b9;background:#fff"></div>
<span class="t g" style="top:716px;font-size:12px;line-height:12px;color:#111;left:19.30px;transform:scaleX(0.9218);transform-origin:0 0;">Base INSS</span>
<span class="t" style="top:738px;font-size:12px;line-height:12px;font-weight:bold;color:#595959;right:1463.54px;transform:scaleX(1.0460);transform-origin:100% 0;">R$ 6.343,99</span>
<div style="left:142px;top:732px;width:118px;height:23px;box-sizing:border-box;border:1px solid #8f8f8f;border-right-color:#b9b9b9;border-bottom-color:#b9b9b9;background:#fff"></div>
<span class="t g" style="top:716px;font-size:12px;line-height:12px;color:#111;left:144.30px;transform:scaleX(0.9818);transform-origin:0 0;">Base INSS 13o.</span>
<span class="t" style="top:738px;font-size:12px;line-height:12px;font-weight:bold;color:#595959;right:1338.54px;transform:scaleX(1.0460);transform-origin:100% 0;">R$ 5.045,65</span>
<div style="left:267px;top:732px;width:118px;height:23px;box-sizing:border-box;border:1px solid #8f8f8f;border-right-color:#b9b9b9;border-bottom-color:#b9b9b9;background:#fff"></div>
<span class="t g" style="top:716px;font-size:12px;line-height:12px;color:#111;left:269.30px;transform:scaleX(0.9206);transform-origin:0 0;">Base FGTS</span>
<span class="t" style="top:738px;font-size:12px;line-height:12px;font-weight:bold;color:#595959;right:1213.54px;transform:scaleX(1.0460);transform-origin:100% 0;">R$ 12.765,79</span>
<div style="left:392px;top:732px;width:118px;height:23px;box-sizing:border-box;border:1px solid #8f8f8f;border-right-color:#b9b9b9;border-bottom-color:#b9b9b9;background:#fff"></div>
<span class="t g" style="top:716px;font-size:12px;line-height:12px;color:#111;left:394.30px;transform:scaleX(0.9681);transform-origin:0 0;">Base FGTS 13o.</span>
<span class="t" style="top:738px;font-size:12px;line-height:12px;font-weight:bold;color:#595959;right:1088.54px;transform:scaleX(1.0460);transform-origin:100% 0;">R$ 5.045,65</span>
<div style="left:517px;top:732px;width:118px;height:23px;box-sizing:border-box;border:1px solid #8f8f8f;border-right-color:#b9b9b9;border-bottom-color:#b9b9b9;background:#fff"></div>
<span class="t g" style="top:716px;font-size:12px;line-height:12px;color:#111;left:519.30px;transform:scaleX(1.0245);transform-origin:0 0;">Valor do Fgts</span>
<span class="t" style="top:738px;font-size:12px;line-height:12px;font-weight:bold;color:#595959;right:963.54px;transform:scaleX(1.0460);transform-origin:100% 0;">R$ 1.424,91</span>
<div style="left:642px;top:732px;width:118px;height:23px;box-sizing:border-box;border:1px solid #8f8f8f;border-right-color:#b9b9b9;border-bottom-color:#b9b9b9;background:#fff"></div>
<span class="t g" style="top:716px;font-size:12px;line-height:12px;color:#111;left:644.30px;transform:scaleX(0.9765);transform-origin:0 0;">Base I.R.R.F.</span>
<span class="t" style="top:738px;font-size:12px;line-height:12px;font-weight:bold;color:#595959;right:838.54px;transform:scaleX(1.0460);transform-origin:100% 0;">R$ 12.832,79</span>
<div style="left:767px;top:732px;width:118px;height:23px;box-sizing:border-box;border:1px solid #8f8f8f;border-right-color:#b9b9b9;border-bottom-color:#b9b9b9;background:#fff"></div>
<span class="t g" style="top:716px;font-size:12px;line-height:12px;color:#111;left:769.30px;transform:scaleX(1.0099);transform-origin:0 0;">Base I.R.R.F. 13o.</span>
<span class="t" style="top:738px;font-size:12px;line-height:12px;font-weight:bold;color:#595959;right:713.54px;transform:scaleX(1.0460);transform-origin:100% 0;">R$ 5.045,65</span>
<div style="left:892px;top:732px;width:118px;height:23px;box-sizing:border-box;border:1px solid #8f8f8f;border-right-color:#b9b9b9;border-bottom-color:#b9b9b9;background:#fff"></div>
<span class="t g" style="top:716px;font-size:12px;line-height:12px;color:#111;left:894.30px;transform:scaleX(0.9566);transform-origin:0 0;">Base I.R.R.F. Férias</span>
<span class="t" style="top:738px;font-size:12px;line-height:12px;font-weight:bold;color:#595959;right:588.54px;transform:scaleX(1.0460);transform-origin:100% 0;">R$ 0,00</span>
<div style="left:268.5px;top:661.5px;width:368px;height:45px;box-sizing:border-box;background:#ff6;border:2px solid #ffc926;mix-blend-mode:multiply"></div>
<div style="left:6px;top:768px;width:1579px;height:1.5px;background:#fff"></div>
<div style="left:6px;top:789.5px;width:1579px;height:1px;background:#a9a9a9"></div>
<div style="left:106.5px;top:771px;width:1px;height:18px;background:#d6d6d6"></div>
<div style="left:107.5px;top:771px;width:1px;height:18px;background:#fff"></div>
<div style="left:456.5px;top:771px;width:1px;height:18px;background:#d6d6d6"></div>
<div style="left:457.5px;top:771px;width:1px;height:18px;background:#fff"></div>
<div style="left:686.5px;top:771px;width:1px;height:18px;background:#d6d6d6"></div>
<div style="left:687.5px;top:771px;width:1px;height:18px;background:#fff"></div>
<span class="t" style="top:775px;font-size:12px;line-height:12px;font-weight:bold;left:39.80px;transform:scaleX(1.0150);transform-origin:0 0;">00158</span>
<span class="t" style="top:775.5px;font-size:12px;line-height:12px;font-weight:bold;left:548.30px;transform:scaleX(0.9446);transform-origin:0 0;">Consulta</span>
<div style="left:1497px;top:769px;width:88px;height:21.5px;box-sizing:border-box;border-right:1.5px solid #a0a0a0;border-bottom:1.5px solid #a0a0a0;border-top:1px solid #fff;border-left:1px solid #fff;background:#f0f0f0"></div>
<svg style="left:1504.6px;top:774.1px" width="73" height="10" viewBox="0 0 73 10"><g fill="#0f5fd7"><rect x="0" y="0.3" width="2" height="9.4"/><path d="M11.5 0.3 L2.5 5 L11.5 9.7Z"/><path d="M30.5 0.3 L22 5 L30.5 9.7Z"/><path d="M41.5 0.3 L50 5 L41.5 9.7Z"/><path d="M60.5 0.3 L69.5 5 L60.5 9.7Z"/><rect x="69.5" y="0.3" width="2" height="9.4"/></g></svg>
<div style="left:0px;top:798.5px;width:1596px;height:24.5px;background:linear-gradient(#fff,#fafafa 3px,#f0f0f0 5px)"></div>
<div style="left:1594px;top:802px;width:2px;height:21px;background:#a3a3a3"></div>
<div style="left:0px;top:821.5px;width:1596px;height:1.5px;background:#a8a8a8"></div>
<span class="t g" style="top:808px;font-size:12px;line-height:12px;color:#3d3d3d;left:3.40px;transform:scaleX(1.0399);transform-origin:0 0;">24/10/2025 Out/2025</span>
<div style="left:129.5px;top:802px;width:1px;height:20px;background:#c4c4c4"></div>
<div style="left:130.5px;top:802px;width:1px;height:20px;background:#fff"></div>
<div style="left:454px;top:802px;width:1px;height:20px;background:#c4c4c4"></div>
<div style="left:455px;top:802px;width:1px;height:20px;background:#fff"></div>
<div style="left:670.7px;top:802px;width:1px;height:20px;background:#c4c4c4"></div>
<div style="left:671.7px;top:802px;width:1px;height:20px;background:#fff"></div>
<div style="left:1294.5px;top:802px;width:1px;height:20px;background:#c4c4c4"></div>
<div style="left:1295.5px;top:802px;width:1px;height:20px;background:#fff"></div>
<span class="t g" style="top:807px;font-size:12px;line-height:12px;color:#111;left:359.30px;transform:scaleX(0.9198);transform-origin:0 0;text-decoration:underline;">Teorema Sistemas</span>
<span class="t g" style="top:807px;font-size:12px;line-height:12px;color:#3d3d3d;left:460.00px;transform:scaleX(0.9728);transform-origin:0 0;">Folha de Pagamento - v.25.08a10.24a</span>
<span class="t g" style="top:807.5px;font-size:12px;line-height:12px;color:#3d3d3d;left:861.00px;transform:scaleX(0.9620);transform-origin:0 0;">0001 COMPENSADOS NOVO MILENIO LTDA</span>
<span class="t g" style="top:807px;font-size:12px;line-height:12px;color:#3d3d3d;left:1298.50px;transform:scaleX(0.9535);transform-origin:0 0;">Reg: COMPENSADOS NOVO MILENIO LTDA</span>
<svg style="left:132px;top:802px" width="224" height="21" viewBox="0 0 224 21">
<g fill="none" stroke="#566474" stroke-width="1.8"><path d="M4.2 11.5 V9 A6.3 6.3 0 0 1 16.8 9 V11.5"/><path d="M16.6 14.5 C16.6 18 13.5 18.6 11 18.6"/></g>
<rect x="2" y="8.6" width="4.6" height="7.6" rx="2" fill="#566474"/><rect x="14.4" y="8.6" width="4.6" height="7.6" rx="2" fill="#566474"/><circle cx="10.6" cy="18.6" r="1.3" fill="#566474"/>
<rect x="54" y="4.5" width="14" height="14" rx="2.6" fill="#111"/><circle cx="61" cy="12" r="3.6" fill="none" stroke="#fff" stroke-width="1.7"/><circle cx="65.3" cy="7.4" r="1.1" fill="#fff"/><rect x="55.5" y="9" width="3" height="1.4" fill="#fff"/>
<g fill="#111"><rect x="78.3" y="9" width="3" height="9"/><circle cx="79.8" cy="6" r="1.8"/><path d="M84 9 H86.8 V10.5 C88 8.5 93 8 93 12.5 V18 H90 V13 C90 10.8 87 10.8 87 13 V18 H84Z"/></g>
<rect x="103" y="5.5" width="16.5" height="12.5" rx="3.5" fill="#111"/><path d="M109 8.8 L114.8 11.8 L109 14.8Z" fill="#fff"/>
<rect x="127" y="2" width="18" height="18" rx="2.5" fill="#222"/><path d="M131.5 6 H134 L141 16 H138.5 Z" fill="none" stroke="#fff" stroke-width="1"/><path d="M140.5 6 L131.8 16" stroke="#fff" stroke-width="1.1"/>
<rect x="153.5" y="4.5" width="14" height="14" rx="1" fill="#111"/><path d="M163 18.5 V13 H165 L165.4 10.7 H163 V9.3 C163 8.5 163.3 8.1 164.3 8.1 H165.5 V6.1 C165.1 6 164.4 5.9 163.5 5.9 C161.6 5.9 160.5 7 160.5 9 V10.7 H158.5 V13 H160.5 V18.5Z" fill="#fff"/>
<path d="M178 5.5 L186 5 L183 9 Z" fill="#3ddc2e"/><path d="M186 5 L192 5.5 L189.5 9.5 L186.5 9.5 L186 15 L183 9 Z" fill="#1e88e5"/><path d="M183 9 L186.5 9.5 L186 15Z" fill="#1565c0"/>
<ellipse cx="211" cy="11.5" rx="6.8" ry="2.6" fill="#c4c4c4" stroke="#222" stroke-width="1"/>
<g fill="none" stroke="#222" stroke-width="1.3"><path d="M199.5 8 L211 3.5 L222.5 8 L217.5 10"/><path d="M199.5 8 L204.5 10"/><path d="M200.8 8.6 V18"/></g><circle cx="200.8" cy="19.2" r="1.1" fill="none" stroke="#222" stroke-width=".9"/>
</svg>
<span class="t" style="top:806px;font-size:16px;line-height:16px;font-weight:bold;color:#222;left:160.80px;transform:scaleX(0.9467);transform-origin:0 0;-webkit-text-stroke:.3px #222;">@</span>
<div style="left:12.5px;top:545px;width:1.5px;height:111px;background:#1a1a1a"></div>
<div style="left:15px;top:544.4px;width:1581px;height:112.6px;box-sizing:border-box;border:3px solid #d9644b;border-radius:3px;box-shadow:0 0 1.5px rgba(200,80,60,.8)"></div>
<div style="left:1100.2px;top:4.7px;width:447.3px;height:160.6px;box-sizing:border-box;border:2.7px solid #d9644b;background:#fff899;border-radius:2px;box-shadow:0 1px 1px rgba(0,0,0,.22)"></div>
<span class="t" style="top:10px;font-size:13px;line-height:13px;color:#111;left:1104.30px;transform:scaleX(0.9807);transform-origin:0 0;-webkit-text-stroke:.5px #111;">QUALIDADE</span>
<span class="t" style="top:26px;font-size:13px;line-height:13px;color:#111;left:1104.30px;-webkit-text-stroke:.5px #111;">CONSULTAS GERAIS PERIÓDICAS</span>
<span class="t" style="top:42px;font-size:13px;line-height:13px;color:#111;left:1104.30px;transform:scaleX(0.9911);transform-origin:0 0;-webkit-text-stroke:.5px #111;">VALORES RESCISÕES</span>
<span class="t" style="top:90px;font-size:13px;line-height:13px;color:#111;left:1104.30px;transform:scaleX(0.9826);transform-origin:0 0;-webkit-text-stroke:.5px #111;">- TESTE OK</span>
<div style="left:1099.5px;top:169.5px;width:446px;height:234.5px;box-sizing:border-box;border:2.8px solid #d9644b;background:linear-gradient(200deg,#fffdd8,#fffbca 55%,#fffac5);border-radius:2px;box-shadow:2px 2px 2px rgba(0,0,0,.28)"></div>
<span class="t" style="top:175px;font-size:13px;line-height:13px;color:#111;left:1103.30px;transform:scaleX(0.9807);transform-origin:0 0;-webkit-text-stroke:.5px #111;">QUALIDADE</span>
<span class="t" style="top:191px;font-size:13px;line-height:13px;color:#111;left:1102.30px;-webkit-text-stroke:.5px #111;">MOVIMENTO DE RESCISÃO</span>
<span class="t" style="top:207px;font-size:13px;line-height:13px;color:#111;left:1103.30px;-webkit-text-stroke:.5px #111;">VALORES ACUMULADOS</span>
<span class="t" style="top:239px;font-size:13px;line-height:13px;font-weight:bold;color:#111;left:1103.40px;">&gt;</span>
<span class="t" style="top:239px;font-size:13px;line-height:13px;font-weight:bold;color:#111;left:1116.30px;">Salário Rescisão</span>
<span class="t" style="top:239px;font-size:13px;line-height:13px;font-weight:bold;color:#111;left:1220.80px;transform:scaleX(0.9912);transform-origin:0 0;">........................................</span>
<span class="t" style="top:239px;font-size:13px;line-height:13px;font-weight:bold;color:#111;left:1364.80px;">R$</span>
<span class="t" style="top:239px;font-size:13px;line-height:13px;font-weight:bold;color:#111;right:149.47px;transform:scaleX(0.9946);transform-origin:100% 0;">5.176,36</span>
<span class="t" style="top:271px;font-size:13px;line-height:13px;font-weight:bold;color:#111;left:1103.40px;">&gt;</span>
<span class="t" style="top:271px;font-size:13px;line-height:13px;font-weight:bold;color:#111;left:1115.40px;transform:scaleX(0.9852);transform-origin:0 0;">Férias Rescisão</span>
<span class="t" style="top:271px;font-size:13px;line-height:13px;font-weight:bold;color:#111;left:1213.80px;transform:scaleX(1.0226);transform-origin:0 0;">.........................................</span>
<span class="t" style="top:271px;font-size:13px;line-height:13px;font-weight:bold;color:#111;left:1366.00px;">R$</span>
<span class="t" style="top:271px;font-size:13px;line-height:13px;font-weight:bold;color:#111;right:149.47px;transform:scaleX(0.9947);transform-origin:100% 0;">12.102,72</span>
<span class="t" style="top:303px;font-size:13px;line-height:13px;font-weight:bold;color:#111;left:1103.40px;">&gt;</span>
<span class="t" style="top:303px;font-size:13px;line-height:13px;font-weight:bold;color:#111;left:1115.00px;transform:scaleX(1.0113);transform-origin:0 0;">13o Salário Rescisão</span>
<span class="t" style="top:303px;font-size:13px;line-height:13px;font-weight:bold;color:#111;left:1247.40px;transform:scaleX(0.9907);transform-origin:0 0;">................................</span>
<span class="t" style="top:303px;font-size:13px;line-height:13px;font-weight:bold;color:#111;left:1362.70px;">R$</span>
<span class="t" style="top:303px;font-size:13px;line-height:13px;font-weight:bold;color:#111;right:151.17px;transform:scaleX(0.9846);transform-origin:100% 0;">5.045,65</span>
<span class="t" style="top:335px;font-size:13px;line-height:13px;font-weight:bold;color:#111;left:1103.40px;">&gt;</span>
<span class="t" style="top:335px;font-size:13px;line-height:13px;font-weight:bold;color:#111;left:1115.00px;transform:scaleX(1.0238);transform-origin:0 0;">Aviso Prévio Indenizado</span>
<span class="t" style="top:335px;font-size:13px;line-height:13px;font-weight:bold;color:#111;left:1269.20px;">.........................</span>
<span class="t" style="top:335px;font-size:13px;line-height:13px;font-weight:bold;color:#111;left:1360.20px;">R$</span>
<span class="t" style="top:335px;font-size:13px;line-height:13px;font-weight:bold;color:#111;right:153.17px;transform:scaleX(0.9886);transform-origin:100% 0;">7.589,43</span>
<span class="t" style="top:351px;font-size:13px;line-height:13px;color:#222;left:1359.60px;transform:scaleX(1.0068);transform-origin:0 0;">---------------------</span>
<span class="t" style="top:367px;font-size:13px;line-height:13px;font-weight:bold;color:#111;left:1103.30px;transform:scaleX(0.9807);transform-origin:0 0;">TOTAL DE VENCIMENTOS</span>
<span class="t" style="top:367px;font-size:13px;line-height:13px;font-weight:bold;color:#111;left:1263.80px;transform:scaleX(0.9783);transform-origin:0 0;">...........................</span>
<span class="t" style="top:367px;font-size:13px;line-height:13px;font-weight:bold;color:#111;left:1360.00px;">R$</span>
<span class="t" style="top:367px;font-size:13px;line-height:13px;font-weight:bold;color:#111;right:151.57px;transform:scaleX(0.9808);transform-origin:100% 0;">29.914,16</span>
<svg style="left:0;top:0" width="1596" height="823" viewBox="0 0 1596 823"><g fill="none" stroke="#c00000" stroke-width="2.1" stroke-linecap="round"><path d="M339.4 655.5C349.1 647.0 359.0 639.1 369.2 631.8C379.5 624.5 390.0 617.9 400.8 611.7C411.6 605.5 422.7 599.9 433.9 594.7C445.2 589.6 456.7 584.9 468.3 580.6C479.9 576.3 491.8 572.4 503.7 568.8C515.6 565.3 527.7 562.1 539.9 559.1C552.0 556.2 564.3 553.5 576.6 551.0C588.9 548.6 601.2 546.3 613.5 544.2C625.9 542.1 638.2 540.1 650.6 538.3C662.9 536.4 675.2 534.7 687.6 533.1C699.9 531.5 712.2 530.0 724.6 528.6C736.9 527.3 749.3 526.0 761.6 524.9C774.0 523.8 786.4 522.8 798.8 521.9C811.2 521.0 823.6 520.2 836.0 519.5C848.5 518.8 860.9 518.3 873.4 517.8C885.9 517.3 898.5 517.0 911.0 516.8C923.6 516.6 936.1 516.5 948.7 516.6C961.2 516.8 973.8 517.1 986.3 517.7C998.8 518.3 1011.3 519.2 1023.7 520.3C1036.2 521.5 1048.6 523.0 1060.9 524.8C1073.2 526.6 1085.4 528.8 1097.5 531.5C1109.7 534.1 1121.7 537.1 1133.6 540.6C1145.5 544.2 1157.2 548.3 1168.6 553.1C1180.0 557.8 1191.1 563.4 1201.8 569.8C1212.4 576.1 1222.7 583.4 1232.4 591.8"/><path d="M455.7 662.8C465.0 653.2 474.9 644.7 485.4 637.2C495.8 629.6 506.8 623.0 518.2 617.1C529.5 611.1 541.2 605.9 553.2 601.1C565.1 596.4 577.2 592.1 589.5 588.2C601.8 584.2 614.3 580.7 626.9 577.4C639.4 574.2 652.1 571.2 664.8 568.4C677.5 565.6 690.3 563.0 703.0 560.5C715.7 558.0 728.5 555.6 741.2 553.4C754.0 551.1 766.8 549.0 779.5 546.9C792.3 544.9 805.1 543.0 817.8 541.2C830.6 539.5 843.4 537.8 856.2 536.3C869.0 534.8 881.8 533.4 894.7 532.2C907.5 530.9 920.4 529.8 933.2 528.8C946.1 527.9 959.0 527.0 971.9 526.3C984.8 525.6 997.7 525.1 1010.6 524.7C1023.6 524.3 1036.5 524.1 1049.5 524.0C1062.5 523.9 1075.5 524.1 1088.4 524.4C1101.4 524.7 1114.3 525.3 1127.3 526.0C1140.2 526.8 1153.1 527.8 1166.0 529.0C1178.9 530.3 1191.8 531.8 1204.6 533.6C1217.4 535.4 1230.2 537.5 1243.0 539.9C1255.7 542.3 1268.4 544.9 1280.8 548.2C1293.3 551.4 1305.6 555.3 1317.5 559.9C1329.4 564.6 1341.0 570.1 1352.0 576.8C1363.1 583.4 1373.6 591.2 1383.5 600.4"/><path d="M562.5 659.7C572.5 651.3 582.9 643.5 593.6 636.2C604.3 629.0 615.4 622.4 626.7 616.3C638.0 610.1 649.7 604.5 661.5 599.4C673.3 594.2 685.4 589.5 697.6 585.1C709.8 580.7 722.2 576.8 734.7 573.1C747.1 569.4 759.7 566.0 772.3 562.9C784.9 559.7 797.6 556.8 810.3 554.1C823.0 551.4 835.7 548.9 848.5 546.6C861.2 544.3 874.0 542.2 886.8 540.3C899.6 538.4 912.5 536.7 925.3 535.1C938.2 533.5 951.1 532.1 964.0 530.9C976.9 529.6 989.8 528.5 1002.7 527.5C1015.6 526.5 1028.6 525.6 1041.5 524.8C1054.4 524.1 1067.4 523.4 1080.3 522.8C1093.2 522.3 1106.2 521.8 1119.1 521.5C1132.0 521.2 1145.0 521.0 1157.9 521.0C1170.8 521.0 1183.8 521.1 1196.7 521.4C1209.7 521.7 1222.6 522.1 1235.6 522.8C1248.5 523.4 1261.5 524.2 1274.5 525.3C1287.4 526.3 1300.4 527.6 1313.4 529.1C1326.4 530.6 1339.4 532.3 1352.2 534.5C1365.1 536.6 1377.8 539.3 1390.3 542.6C1402.7 545.9 1414.9 549.9 1426.7 554.7C1438.5 559.6 1449.9 565.4 1460.8 572.3C1471.6 579.3 1482.0 587.3 1491.6 596.7"/><path d="M1098.4 247.3 L670 595.2"/><path d="M1098.4 279.6 L975 599"/><path d="M1098.4 310.5 L885 591.3"/><path d="M1101 340.3 L1076 590"/></g><g fill="#c00000" stroke="#c00000" stroke-width=".6" stroke-linejoin="round"><path d="M1233.8 598 L1220.3 590.6 L1232.5 582.3 Z"/><path d="M1385.7 606.2 L1372.2 598.1 L1383.8 590.2 Z"/><path d="M1494.3 603.3 L1480.3 594.5 L1491.4 586.7 Z"/><path d="M666.2 598.3 L672.7 585.5 L681.2 596.2 Z"/><path d="M973.3 603.4 L972.6 586.8 L985.2 592 Z"/><path d="M881.8 595.5 L885.5 579 L896.2 588 Z"/><path d="M1075.4 596.2 L1070.3 581.8 L1084.2 583 Z"/></g></svg>
</div></body></html>
